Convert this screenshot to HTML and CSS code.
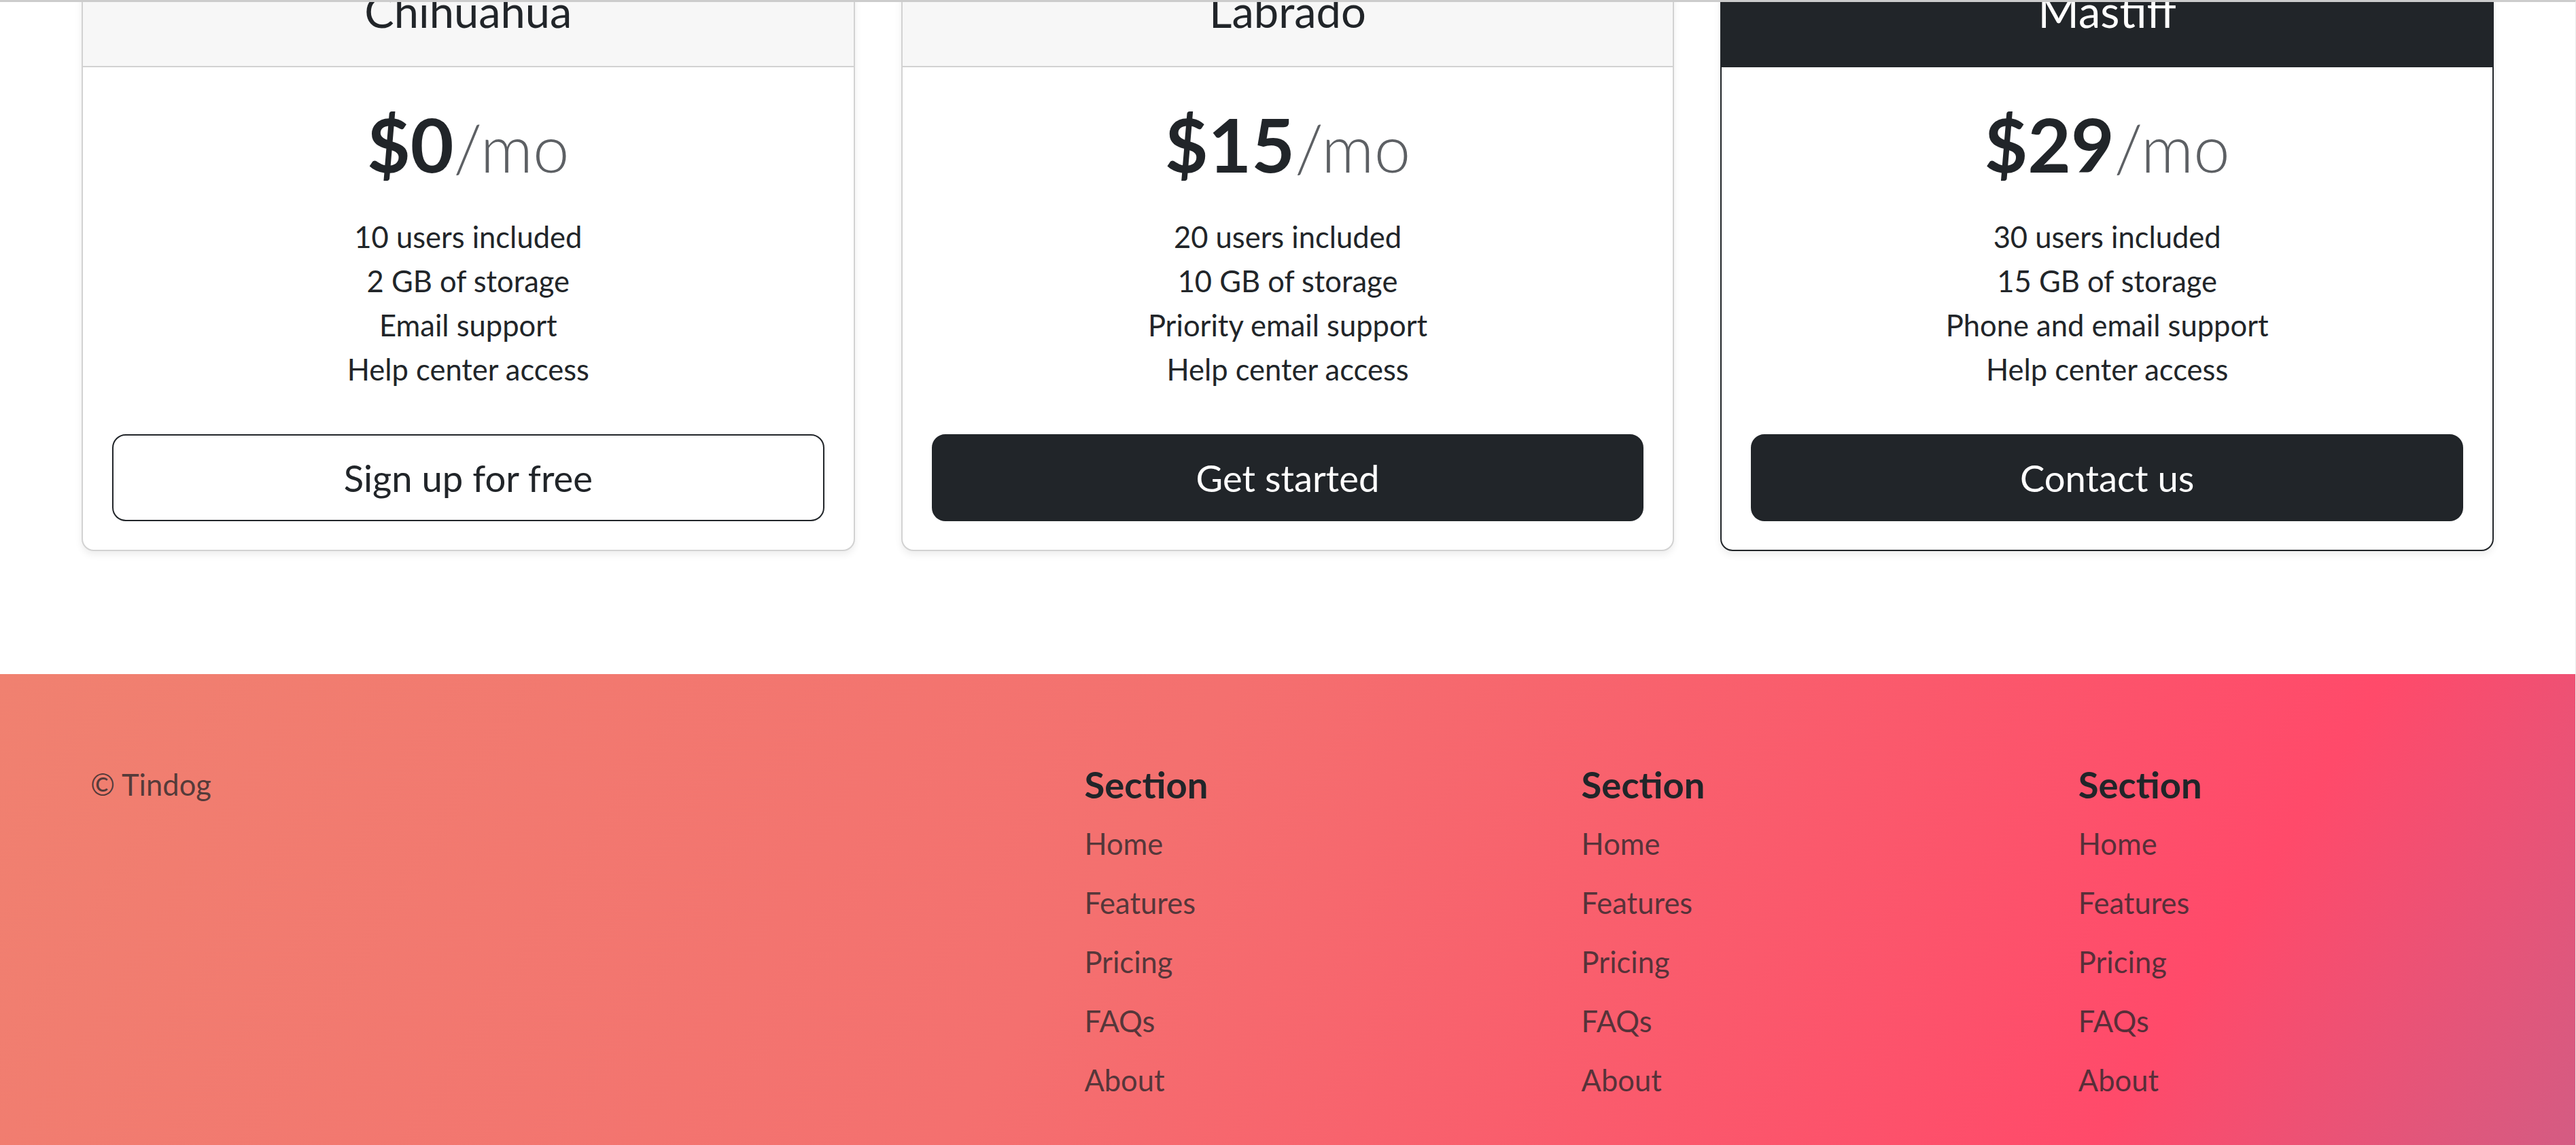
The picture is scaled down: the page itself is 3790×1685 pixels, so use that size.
FILE: index.html
```html
<!DOCTYPE html>
<html lang="en">
<head>
<meta charset="utf-8">
<title>Tindog Pricing</title>
<link rel="stylesheet" href="styles.css">
</head>
<body>
<div class="page">
  <div class="viewport">
    <main class="pricing">
      <div class="card">
        <div class="card-header"><h4 class="card-title">Chihuahua</h4></div>
        <div class="card-body">
          <h1 class="price">$0<small>/mo</small></h1>
          <ul class="features">
            <li>10 users included</li>
            <li>2 GB of storage</li>
            <li>Email support</li>
            <li>Help center access</li>
          </ul>
          <button type="button" class="btn btn-outline">Sign up for free</button>
        </div>
      </div>
      <div class="card">
        <div class="card-header"><h4 class="card-title">Labrado</h4></div>
        <div class="card-body">
          <h1 class="price">$15<small>/mo</small></h1>
          <ul class="features">
            <li>20 users included</li>
            <li>10 GB of storage</li>
            <li>Priority email support</li>
            <li>Help center access</li>
          </ul>
          <button type="button" class="btn btn-dark">Get started</button>
        </div>
      </div>
      <div class="card card-dark">
        <div class="card-header"><h4 class="card-title">Mastiff</h4></div>
        <div class="card-body">
          <h1 class="price">$29<small>/mo</small></h1>
          <ul class="features">
            <li>30 users included</li>
            <li>15 GB of storage</li>
            <li>Phone and email support</li>
            <li>Help center access</li>
          </ul>
          <button type="button" class="btn btn-dark">Contact us</button>
        </div>
      </div>
    </main>

    <footer class="footer">
      <div class="footer-brand">© Tindog</div>
      <div class="footer-col">
        <h5>Section</h5>
        <ul>
          <li><a href="#">Home</a></li>
          <li><a href="#">Features</a></li>
          <li><a href="#">Pricing</a></li>
          <li><a href="#">FAQs</a></li>
          <li><a href="#">About</a></li>
        </ul>
      </div>
      <div class="footer-col">
        <h5>Section</h5>
        <ul>
          <li><a href="#">Home</a></li>
          <li><a href="#">Features</a></li>
          <li><a href="#">Pricing</a></li>
          <li><a href="#">FAQs</a></li>
          <li><a href="#">About</a></li>
        </ul>
      </div>
      <div class="footer-col">
        <h5>Section</h5>
        <ul>
          <li><a href="#">Home</a></li>
          <li><a href="#">Features</a></li>
          <li><a href="#">Pricing</a></li>
          <li><a href="#">FAQs</a></li>
          <li><a href="#">About</a></li>
        </ul>
      </div>
    </footer>
  </div>
</div>
</body>
</html>
```

FILE: styles.css
```css
html, body {
  margin: 0;
  padding: 0;
  background: #ffffff;
}

body {
  font-family: "Lato", "Open Sans", sans-serif;
  font-size: 43.5px;
  line-height: 65px;
  color: #212529;
}

.page {
  border-top: 3px solid #cccccc;
  border-right: 1px solid #ebebeb;
  height: 1682px;
  overflow: hidden;
}

.viewport {
  overflow: hidden;
}

/* ---------- pricing cards ---------- */
.pricing {
  width: 3549px;
  margin: -70px auto 181px;
  display: grid;
  grid-template-columns: 1fr 1fr 1fr;
  gap: 68px;
}

.card {
  background: #ffffff;
  border: 2px solid #d2d2d2;
  border-radius: 18px;
  box-shadow: 0 5px 11px rgba(0, 0, 0, 0.075);
  overflow: hidden;
  text-align: center;
}

.card-header {
  background: #f7f7f7;
  border-bottom: 2px solid #d2d2d2;
  padding: 42px 20px;
}

.card-title {
  margin: 0;
  font-size: 65px;
  line-height: 78px;
  font-weight: 400;
}

.card-dark {
  border-color: #212529;
}

.card-dark .card-header {
  background: #212529;
  border-bottom-color: #212529;
  color: #ffffff;
}

.card-body {
  padding: 46px 43px 42px;
}

.price {
  margin: 0;
  font-size: 110px;
  line-height: 132px;
  font-weight: 700;
  color: #212529;
}

.price small {
  font-size: 96px;
  font-weight: 300;
  color: #5d6064;
}

.features {
  list-style: none;
  margin: 33px 0 63px;
  padding: 0;
}

.features li {
  line-height: 65px;
}

.btn {
  display: block;
  width: 100%;
  box-sizing: border-box;
  font-family: inherit;
  font-size: 54.4px;
  line-height: 82px;
  padding: 21px 43px;
  border: 2px solid #212529;
  border-radius: 20px;
  cursor: pointer;
}

.btn-outline {
  background: #ffffff;
  color: #212529;
}

.btn-dark {
  background: #212529;
  color: #ffffff;
}

/* ---------- footer ---------- */
.footer {
  display: grid;
  grid-template-columns: 2fr 1fr 1fr 1fr;
  padding: 130px 0 60px 133px;
  background: linear-gradient(122deg, #f08170 0%, #f4706f 43%, #ff4a6a 83%, #d35c83 100%);
  min-height: 700px;
  box-sizing: border-box;
}

.footer-brand {
  color: rgba(33, 37, 41, 0.75);
  line-height: 65px;
}

.footer-col h5 {
  margin: 0 0 22px;
  font-size: 54.4px;
  line-height: 65px;
  font-weight: 700;
  color: #212529;
}

.footer-col ul {
  list-style: none;
  margin: 0;
  padding: 0;
}

.footer-col li {
  line-height: 65px;
  margin-bottom: 22px;
}

.footer-col a {
  color: rgba(33, 37, 41, 0.75);
  text-decoration: none;
}
```
